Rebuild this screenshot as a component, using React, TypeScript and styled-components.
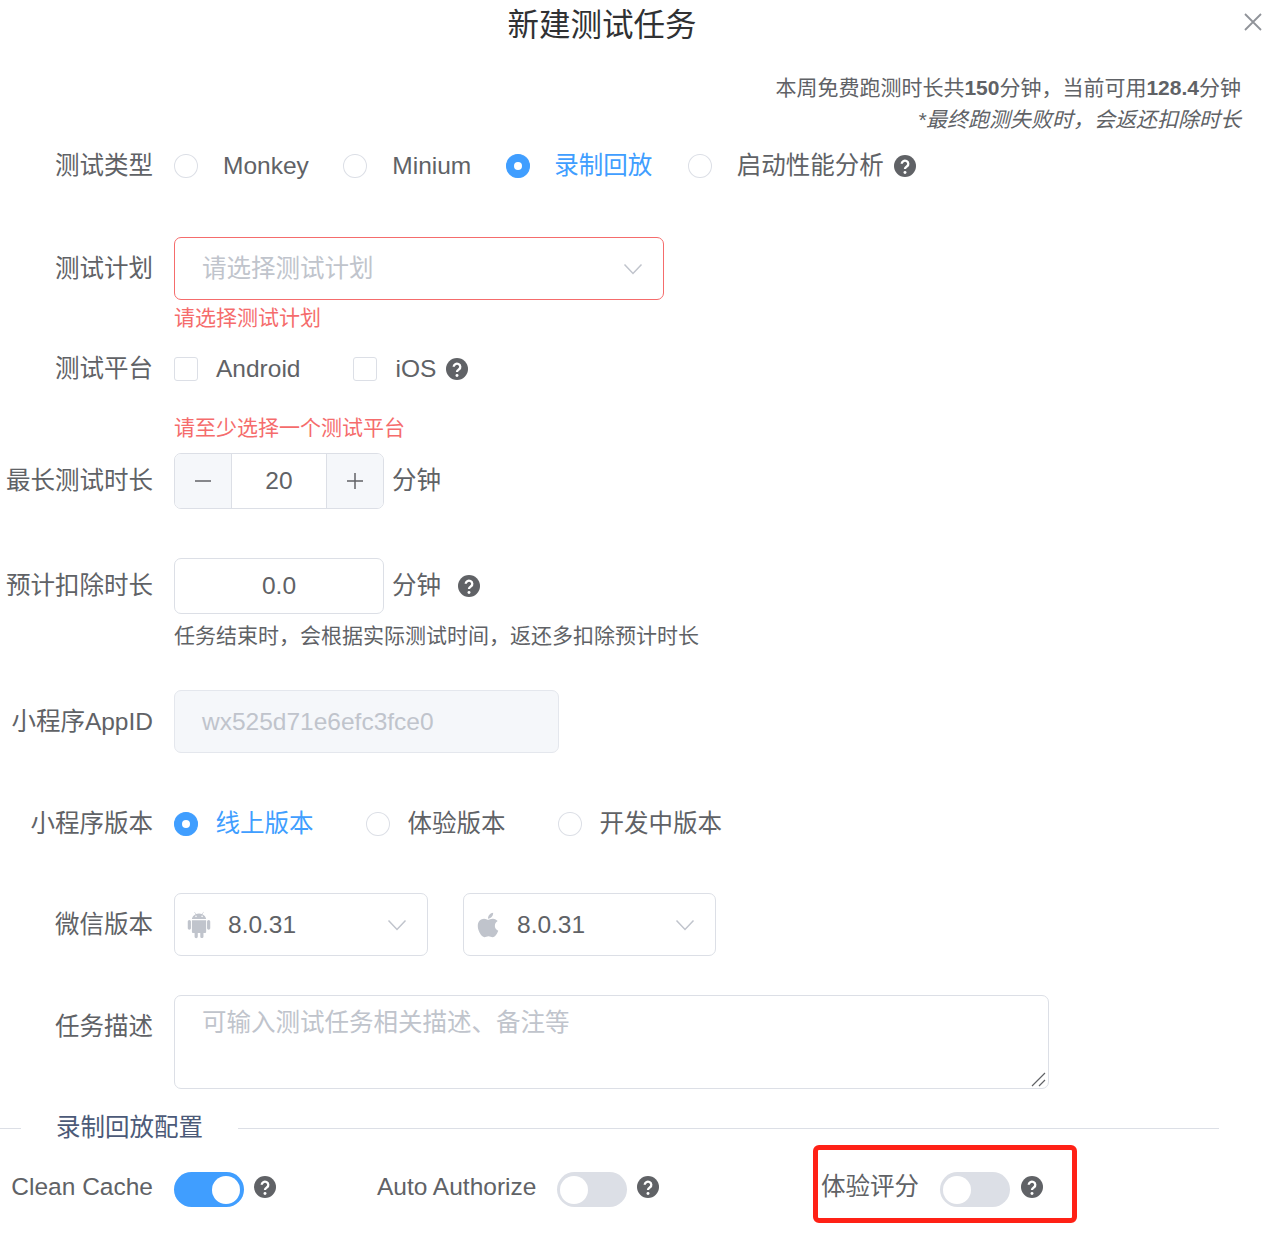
import React from "react";
import styled, { createGlobalStyle } from "styled-components";
import { AiFillAndroid, AiFillApple } from "react-icons/ai";

const FONT = `"Liberation Sans", "Noto Sans CJK SC", sans-serif`;

const Global = createGlobalStyle`
  html, body { margin: 0; padding: 0; background: #fff; }
  body { font-family: ${FONT}; color: #606266; overflow: hidden; }
  * { box-sizing: border-box; }
`;

const Page = styled.div`
  position: relative;
  width: 1283px;
  height: 1244px;
  overflow: hidden;
  font-size: 24.5px;
  line-height: 30px;
`;

const Title = styled.h1`
  margin: 0;
  width: 1204px;
  height: 48px;
  line-height: 50px;
  font-size: 31.5px;
  font-weight: 400;
  text-align: center;
  color: #303133;
`;

const Close = styled.svg`
  position: absolute;
  top: 13px;
  left: 1244px;
  width: 18px;
  height: 18px;
  stroke: #909399;
  stroke-width: 1.8;
  fill: none;
`;

const Notes = styled.div`
  margin-top: 24px;
  padding-right: 42px;
  text-align: right;
  font-size: 21px;
  line-height: 32px;
  height: 73px;
  b { font-weight: 700; }
`;

const Emphasis = styled.div`
  font-style: italic;
`;

const FormItem = styled.div<{ $mb: number }>`
  display: grid;
  grid-template-columns: 153px 1fr;
  column-gap: 21px;
  align-items: start;
  margin-bottom: ${(p) => p.$mb}px;
`;

const Label = styled.label<{ $h: number }>`
  text-align: right;
  white-space: nowrap;
  line-height: ${(p) => p.$h}px;
`;

const Inline = styled.div<{ $h: number }>`
  display: flex;
  align-items: center;
  height: ${(p) => p.$h}px;
  white-space: nowrap;
`;

const Option = styled.span<{ $gap: number; $after: number; $active?: boolean }>`
  display: inline-flex;
  align-items: center;
  gap: ${(p) => p.$gap}px;
  margin-right: ${(p) => p.$after}px;
  color: ${(p) => (p.$active ? "#409eff" : "#606266")};
`;

const Radio = styled.span<{ $on?: boolean }>`
  display: inline-flex;
  align-items: center;
  justify-content: center;
  width: 24px;
  height: 24.5px;
  border-radius: 50%;
  border: 1px solid ${(p) => (p.$on ? "#409eff" : "#dcdfe6")};
  background: ${(p) => (p.$on ? "#409eff" : "#fff")};
  &::after {
    content: "";
    width: 8px;
    height: 8px;
    border-radius: 50%;
    background: ${(p) => (p.$on ? "#fff" : "transparent")};
  }
`;

const Check = styled.span`
  width: 24px;
  height: 24.5px;
  border-radius: 3px;
  border: 1px solid #dcdfe6;
  background: #fff;
`;

const HelpSvg = styled.svg<{ $ml: number }>`
  width: 22px;
  height: 22px;
  margin-left: ${(p) => p.$ml}px;
  flex: none;
`;

const Help = ({ ml }: { ml: number }) => (
  <HelpSvg $ml={ml} viewBox="0 0 24 24">
    <circle cx="12" cy="12" r="12" fill="#606266" />
    <path d="M8.4 9.6a3.6 3.4 0 1 1 5.8 2.7c-1.3 1-2.2 1.4-2.2 3" fill="none" stroke="#fff" strokeWidth="2.5" />
    <circle cx="12" cy="19" r="1.6" fill="#fff" />
  </HelpSvg>
);

const Select = styled.div<{ $w: number; $error?: boolean }>`
  display: flex;
  align-items: center;
  width: ${(p) => p.$w}px;
  height: 63px;
  flex: none;
  border: 1px solid ${(p) => (p.$error ? "#f56c6c" : "#dcdfe6")};
  border-radius: 7px;
  background: #fff;
`;

const Placeholder = styled.span`
  flex: 1;
  padding-left: 27px;
  color: #c0c4cc;
`;

const Version = styled.span`
  flex: 1;
  padding-left: 9px;
  display: flex;
  align-items: center;
  gap: 14px;
  color: #606266;
  svg { width: 30px; height: 30px; color: #c0c4cc; flex: none; }
`;

const Chevron = styled.svg`
  width: 20px;
  height: 12px;
  margin-right: 20px;
  stroke: #c0c4cc;
  stroke-width: 1.5;
  fill: none;
  flex: none;
`;

const ErrorText = styled.div<{ $top?: number }>`
  font-size: 21px;
  line-height: 35px;
  padding-top: ${(p) => p.$top ?? 0}px;
  color: #f56c6c;
`;

const Stepper = styled.div`
  display: flex;
  width: 210px;
  height: 56px;
  flex: none;
  border: 1px solid #dcdfe6;
  border-radius: 7px;
  overflow: hidden;
`;

const StepButton = styled.span<{ $side: "left" | "right" }>`
  display: flex;
  align-items: center;
  justify-content: center;
  width: 57px;
  flex: none;
  background: #f5f7fa;
  border-${(p) => (p.$side === "left" ? "right" : "left")}: 1px solid #dcdfe6;
  svg { width: 18px; height: 18px; stroke: #606266; stroke-width: 1.5; fill: none; }
`;

const StepValue = styled.span`
  flex: 1;
  text-align: center;
  line-height: 54px;
  color: #606266;
`;

const Field = styled.div<{ $w: number; $h: number; $disabled?: boolean; $center?: boolean }>`
  width: ${(p) => p.$w}px;
  height: ${(p) => p.$h}px;
  flex: none;
  line-height: ${(p) => p.$h - 2}px;
  border: 1px solid ${(p) => (p.$disabled ? "#e4e7ed" : "#dcdfe6")};
  border-radius: 7px;
  background: ${(p) => (p.$disabled ? "#f5f7fa" : "#fff")};
  color: ${(p) => (p.$disabled ? "#c0c4cc" : "#606266")};
  padding: ${(p) => (p.$center ? "0" : "0 27px")};
  text-align: ${(p) => (p.$center ? "center" : "left")};
`;

const Unit = styled.span`
  margin-left: 8px;
`;

const Hint = styled.div`
  font-size: 21px;
  line-height: 44px;
  color: #606266;
`;

const SelectRow = styled.div`
  display: flex;
  gap: 35px;
`;

const TextAreaWrap = styled.div`
  position: relative;
  width: 875px;
  height: 94px;
`;

const TextArea = styled.textarea`
  display: block;
  width: 100%;
  height: 100%;
  padding: 9px 27px;
  border: 1px solid #dcdfe6;
  border-radius: 7px;
  font: 24.5px/1.5 ${FONT};
  color: #606266;
  outline: none;
  resize: none;
  &::placeholder { color: #c0c4cc; opacity: 1; }
`;

const Resizer = styled.svg`
  position: absolute;
  right: 3px;
  bottom: 2px;
  width: 15px;
  height: 15px;
  stroke: #606266;
  stroke-width: 1.2;
  fill: none;
`;

const Divider = styled.div`
  display: flex;
  align-items: center;
  width: 1219px;
  height: 34px;
  margin-bottom: 27px;
  color: #4c5a78;
`;

const DividerLine = styled.span<{ $w?: number }>`
  height: 1px;
  background: #dcdfe6;
  ${(p) => (p.$w ? `width: ${p.$w}px;` : "flex: 1;")}
`;

const DividerText = styled.span`
  padding: 0 35px;
`;

const SwitchRow = styled.div`
  display: grid;
  grid-template-columns: 377px 444px auto;
`;

const SwitchItem = styled.div<{ $labelWidth: number }>`
  position: relative;
  display: flex;
  align-items: flex-start;
  height: 35px;
  white-space: nowrap;
  > span:first-child {
    width: ${(p) => p.$labelWidth}px;
    margin-right: 20.5px;
    text-align: right;
  }
  > svg { margin-top: 4px; }
`;

const Toggle = styled.span<{ $on?: boolean }>`
  display: flex;
  justify-content: ${(p) => (p.$on ? "flex-end" : "flex-start")};
  width: 70px;
  height: 35px;
  padding: 3.5px;
  border-radius: 18px;
  background: ${(p) => (p.$on ? "#409eff" : "#dcdfe6")};
  &::after {
    content: "";
    width: 28px;
    height: 28px;
    border-radius: 50%;
    background: #fff;
  }
`;

const Highlight = styled.span`
  position: absolute;
  left: -8px;
  top: -27px;
  width: 264px;
  height: 78px;
  border: 5.5px solid #ff2116;
  border-radius: 6px;
  pointer-events: none;
`;

const ChevronIcon = () => (
  <Chevron viewBox="0 0 20 12">
    <polyline points="1.5,1.5 10,10.5 18.5,1.5" />
  </Chevron>
);

export default function App() {
  return (
    <Page>
      <Global />
      <Title>新建测试任务</Title>
      <Close viewBox="0 0 18 18">
        <path d="M1 1 L17 17 M17 1 L1 17" />
      </Close>
      <Notes>
        <div>
          本周免费跑测时长共<b>150</b>分钟，当前可用<b>128.4</b>分钟
        </div>
        <Emphasis>*最终跑测失败时，会返还扣除时长</Emphasis>
      </Notes>

      <FormItem $mb={50}>
        <Label $h={42}>测试类型</Label>
        <Inline $h={42}>
          <Option $gap={25} $after={34.5}><Radio />Monkey</Option>
          <Option $gap={25} $after={34.5}><Radio />Minium</Option>
          <Option $gap={24.5} $after={35.5} $active><Radio $on />录制回放</Option>
          <Option $gap={25} $after={0}><Radio />启动性能分析</Option>
          <Help ml={10} />
        </Inline>
      </FormItem>

      <FormItem $mb={13}>
        <Label $h={63}>测试计划</Label>
        <div>
          <Select $w={490} $error>
            <Placeholder>请选择测试计划</Placeholder>
            <ChevronIcon />
          </Select>
          <ErrorText>请选择测试计划</ErrorText>
        </div>
      </FormItem>

      <FormItem $mb={8}>
        <Label $h={42}>测试平台</Label>
        <div>
          <Inline $h={42}>
            <Option $gap={18} $after={53}><Check />Android</Option>
            <Option $gap={18} $after={0}><Check />iOS</Option>
            <Help ml={10} />
          </Inline>
          <ErrorText $top={20}>请至少选择一个测试平台</ErrorText>
        </div>
      </FormItem>

      <FormItem $mb={49}>
        <Label $h={56}>最长测试时长</Label>
        <Inline $h={56}>
          <Stepper>
            <StepButton $side="left">
              <svg viewBox="0 0 18 18"><path d="M1 9 H17" /></svg>
            </StepButton>
            <StepValue>20</StepValue>
            <StepButton $side="right">
              <svg viewBox="0 0 18 18"><path d="M1 9 H17 M9 1 V17" /></svg>
            </StepButton>
          </Stepper>
          <Unit>分钟</Unit>
        </Inline>
      </FormItem>

      <FormItem $mb={32}>
        <Label $h={56}>预计扣除时长</Label>
        <div>
          <Inline $h={56}>
            <Field $w={210} $h={56} $center>0.0</Field>
            <Unit>分钟</Unit>
            <Help ml={17} />
          </Inline>
          <Hint>任务结束时，会根据实际测试时间，返还多扣除预计时长</Hint>
        </div>
      </FormItem>

      <FormItem $mb={50}>
        <Label $h={63}>小程序AppID</Label>
        <Field $w={385} $h={63} $disabled>wx525d71e6efc3fce0</Field>
      </FormItem>

      <FormItem $mb={48}>
        <Label $h={42}>小程序版本</Label>
        <Inline $h={42}>
          <Option $gap={17.5} $after={52.5} $active><Radio $on />线上版本</Option>
          <Option $gap={17.5} $after={52.5}><Radio />体验版本</Option>
          <Option $gap={17.5} $after={0}><Radio />开发中版本</Option>
        </Inline>
      </FormItem>

      <FormItem $mb={39}>
        <Label $h={63}>微信版本</Label>
        <SelectRow>
          <Select $w={254}>
            <Version><AiFillAndroid />8.0.31</Version>
            <ChevronIcon />
          </Select>
          <Select $w={253}>
            <Version><AiFillApple />8.0.31</Version>
            <ChevronIcon />
          </Select>
        </SelectRow>
      </FormItem>

      <FormItem $mb={22}>
        <Label $h={63}>任务描述</Label>
        <TextAreaWrap>
          <TextArea placeholder="可输入测试任务相关描述、备注等" />
          <Resizer viewBox="0 0 15 15">
            <path d="M1 14 L14 1 M8 14 L14 8" />
          </Resizer>
        </TextAreaWrap>
      </FormItem>

      <Divider>
        <DividerLine $w={21} />
        <DividerText>录制回放配置</DividerText>
        <DividerLine />
      </Divider>

      <SwitchRow>
        <SwitchItem $labelWidth={153}>
          <span>Clean Cache</span>
          <Toggle $on />
          <Help ml={10} />
        </SwitchItem>
        <SwitchItem $labelWidth={159}>
          <span>Auto Authorize</span>
          <Toggle />
          <Help ml={10} />
        </SwitchItem>
        <SwitchItem $labelWidth={98}>
          <span>体验评分</span>
          <Toggle />
          <Help ml={11} />
          <Highlight />
        </SwitchItem>
      </SwitchRow>
    </Page>
  );
}
